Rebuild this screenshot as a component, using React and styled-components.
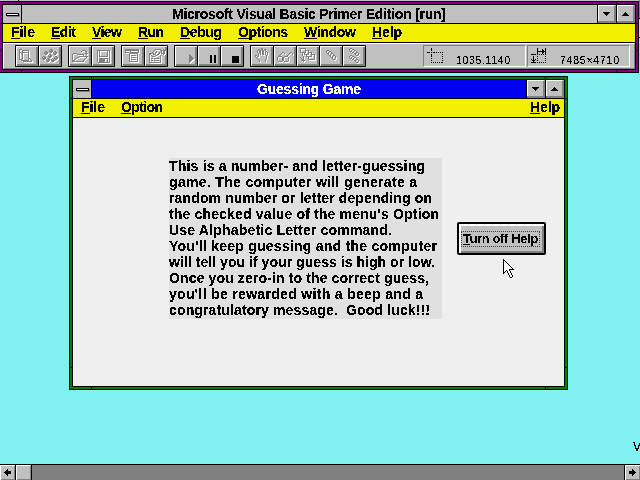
import React, { useLayoutEffect, useRef, useState } from "react";
import styled, { createGlobalStyle } from "styled-components";

const GlobalStyle = createGlobalStyle`
  * { box-sizing: border-box; }
  body { margin: 0; overflow: hidden; background: #80f0f0; }
`;

const Desktop = styled.main`
  position: relative;
  display: flex;
  flex-direction: column;
  width: 640px;
  height: 480px;
  overflow: hidden;
  background: #80f0f0;
  color: #000;
  font-family: "Liberation Sans", Arial, sans-serif;
`;

const TextBox = styled.span`
  display: block;
  flex: none;
  width: ${(p) => p.$width}px;
  height: 16px;
  line-height: 16px;
  font-size: ${(p) => p.$size || 14}px;
  font-weight: ${(p) => (p.$light ? 400 : 700)};
  color: ${(p) => p.$color || "#000"};
  white-space: pre;
  filter: url(#crisp);
`;

const Mnemonic = styled.span`
  text-decoration: underline;
  text-decoration-thickness: 1px;
  text-underline-offset: 1px;
  text-decoration-skip-ink: none;
`;

/* One line of text, tracked so that it fills the given width. */
function Label({ children, width, size, light, color, mnemonic }) {
  const ref = useRef(null);
  const [spacing, setSpacing] = useState(0);
  useLayoutEffect(() => {
    const natural = ref.current.getBoundingClientRect().width;
    setSpacing((width - natural) / (children.length - 1));
  }, [children, width]);
  return (
    <TextBox $width={width} $size={size} $light={light} $color={color}>
      <span ref={ref} style={{ letterSpacing: `${spacing}px` }}>
        {mnemonic ? <Mnemonic>{children[0]}</Mnemonic> : children[0]}
        {children.slice(1)}
      </span>
    </TextBox>
  );
}

/* ---------- bitmap drawings ---------- */

const Bitmap = styled.svg`
  display: block;
  flex: none;
  overflow: visible;
  shape-rendering: crispEdges;
`;

const pathOf = (rows, ch) =>
  rows
    .flatMap((row, y) => [...row].map((c, x) => (c === ch ? `M${x} ${y}h1v1h-1z` : "")))
    .join("");

function Pixels({ rows, color = "#000", etched }) {
  return (
    <Bitmap width={rows[0].length} height={rows.length}>
      {etched && <path d={pathOf(rows, "#")} fill="#fff" transform="translate(1 1)" />}
      <path d={pathOf(rows, "o")} fill="#fff" />
      <path d={pathOf(rows, "#")} fill={color} />
    </Bitmap>
  );
}

const ICONS = {
  form: [
    "###...........",
    "#..#######....",
    "#..#.....#....",
    "##.#######....",
    "#.##.....#....",
    "#..#.....#....",
    "#..#.....#....",
    "#..#.....#....",
    "#..#.....#....",
    "#..#.....##...",
    "###......#.#..",
    "..########..#.",
    "....#########.",
  ],
  module: [
    "........##.......",
    ".......#.##......",
    "...##..####.##...",
    "..#.##..##.#.##..",
    "..####.....####..",
    "...##..##...##...",
    "......#.##.......",
    ".##...####...##..",
    "#.##...##...#.##.",
    "####.##...#.####.",
    ".##.#.##.#.#.##..",
    "....####.####....",
    ".....##...##.....",
  ],
  open: [
    "..........####..",
    ".........#...##.",
    "..............#.",
    ".####........###",
    "#....#######..#.",
    "#..........#....",
    "#......#########",
    "#....##.......#.",
    "#..##........#..",
    "#.#.........#...",
    "##.........#....",
    "############....",
  ],
  save: [
    "#############",
    "#.#.......#.#",
    "#.#.......#.#",
    "#.#.......#.#",
    "#.#.......#.#",
    "#.#.......#.#",
    "#.#########.#",
    "#...........#",
    "#.#########.#",
    "#.######..#.#",
    "#.######..#.#",
    "#.######..#.#",
    ".############",
  ],
  menu: [
    "##############",
    "##############",
    "#....#.......#",
    "####.#########",
    "....#########.",
    "....#.......#.",
    "....#.#####.#.",
    "....#.......#.",
    "....#.#####.#.",
    "....#.......#.",
    "....#.#####.#.",
    "....#.......#.",
    "....#########.",
  ],
  properties: [
    "......######..#.",
    ".....#.....##.##",
    "....#..#....#.##",
    "...#..##..#.#.##",
    "#####.#..##.####",
    "##..##..##....#.",
    "#.#...##...#....",
    "#..###.....#....",
    "#..........#....",
    "#.##.#####.#....",
    "#..........#....",
    "#.##.#####.#....",
    "#..........#....",
    "############....",
  ],
  run: ["#....", "##...", "###..", "####.", "#####", "####.", "###..", "##...", "#...."],
  pause: ["##..##", "##..##", "##..##", "##..##", "##..##", "##..##", "##..##", "##..##"],
  stop: ["#######", "#######", "#######", "#######", "#######", "#######", "#######"],
  hand: [
    "......##.....",
    "...##.##.##..",
    "..#.##.##.#..",
    "..#.##.##.##.",
    "..#.##.##.#.#",
    "...#.#.##.#.#",
    "...#.#.##.#.#",
    "##.#.......#.",
    "#.##.......#.",
    ".#.........#.",
    "..#........#.",
    "...#......#..",
    "....#.....#..",
    "....#.....#..",
  ],
  glasses: [
    ".....##......##.",
    "....#..#....#..#",
    "...#.......#...#",
    "..#.......#.....",
    ".####..####.....",
    "#....##....#....",
    "#....##....#....",
    "#....##....#....",
    "#....##....#....",
    ".####..####.....",
  ],
  calls: [
    "######.........",
    "#....#.........",
    "#....####......",
    "#....#..#......",
    "######..####...",
    "..#.#...#..#...",
    "..#.#####..####",
    "..#...#....#..#",
    "...#..######..#",
    "#..#....#.....#",
    ".#.#....#.....#",
    "..##....#######",
    ".####..........",
    "...#...........",
  ],
  step: [
    ".##.......",
    "#..##.....",
    "#.#..#....",
    ".##..##...",
    "..#.#..#..",
    "...##..##.",
    "....#.#..#",
    ".....##..#",
    "......#..#",
    ".......##.",
  ],
  procedure: [
    ".##.......",
    "#..##.....",
    "#.#..##...",
    ".##.#..#..",
    "...##..##.",
    ".....##..#",
    "......#..#",
    ".##....##.",
    "#..##.....",
    "#.#..##...",
    ".##.#..#..",
    "...##..##.",
    ".....##..#",
    "......#..#",
    ".......##.",
  ],
  position: [
    "....#...........",
    "....#...........",
    "....#...........",
    "................",
    "###.#.##.#.#.#.#",
    "................",
    "....#..........#",
    "....#...........",
    "....#..........#",
    "................",
    "....#..........#",
    "................",
    "....#..........#",
    "................",
    "....#.#.#.#.#.##",
  ],
  size: [
    "......#.......#",
    "......#....#..#",
    "......#....##.#",
    "......#########",
    "......#....##.#",
    "......#....#..#",
    "#####.#.#.#.#.#",
    "...............",
    "..#...#.......#",
    "..#............",
    "..#...#.......#",
    "#.#.#..........",
    ".###..#.......#",
    "..#............",
    "#####.#.#.#.#.#",
  ],
  down: ["#######", ".#####.", "..###..", "...#..."],
  up: ["...#...", "..###..", ".#####.", "#######"],
  left: ["...#...", "..##...", ".######", "#######", ".######", "..##...", "...#..."],
  right: ["...#...", "...##..", "######.", "#######", "######.", "...##..", "...#..."],
  pointer: [
    "#...........",
    "##..........",
    "#o#.........",
    "#oo#........",
    "#ooo#.......",
    "#oooo#......",
    "#ooooo#.....",
    "#oooooo#....",
    "#ooooooo#...",
    "#oooooooo#..",
    "#ooooo#####.",
    "#oo#oo#.....",
    "#o#.#oo#....",
    "##..#oo#....",
    "#....#oo#...",
    ".....#oo#...",
    "......#oo#..",
    "......#oo#..",
    ".......##...",
  ],
};

/* ---------- window chrome ---------- */

const Frame = styled.section`
  position: relative;
  display: flex;
  flex-direction: column;
  flex: none;
  width: ${(p) => p.$width}px;
  height: ${(p) => p.$height}px;
  margin: ${(p) => p.$margin};
  padding: 3px;
  border: 1px solid #000;
  background: ${(p) => p.$color};
  box-shadow: inset 0 0 0 2px ${(p) => p.$color}, inset 0 0 0 3px #000;
`;

/* Corner divisions drawn over the sizing border. */
const Notch = styled.i`
  position: absolute;
  background: #000;
  ${(p) => (p.$vertical ? "width: 1px; height: 4px;" : "width: 4px; height: 1px;")}
  ${(p) => p.$side}: -1px;
  ${(p) => p.$from}: 21px;
`;

const NOTCHES = [
  ["top", "left"], ["top", "right"], ["bottom", "left"], ["bottom", "right"],
  ["left", "top"], ["right", "top"], ["left", "bottom"], ["right", "bottom"],
];

function Window({ children, ...frame }) {
  return (
    <Frame {...frame}>
      {children}
      {NOTCHES.map(([side, from]) => (
        <Notch key={side + from} $side={side} $from={from} $vertical={side === "top" || side === "bottom"} />
      ))}
    </Frame>
  );
}

const TitleRow = styled.header`
  display: flex;
  flex: none;
  height: 19px;
  border-bottom: 1px solid #000;
  background: ${(p) => p.$color};
`;

const SystemBox = styled.div`
  display: flex;
  align-items: center;
  justify-content: center;
  width: 19px;
  border-right: 1px solid #000;
  background: #c0c0c0;
`;

const SystemBar = styled.i`
  width: 13px;
  height: 3px;
  border: 1px solid #000;
  background: #fff;
  box-shadow: 1px 1px 0 #808080;
`;

const Caption = styled.h1`
  display: flex;
  flex: 1;
  margin: 0;
  padding: 1px 0 0 ${(p) => p.$indent}px;
`;

const SizeButton = styled.div`
  display: flex;
  align-items: center;
  justify-content: center;
  width: 18px;
  height: 18px;
  margin-left: 1px;
  border: solid;
  border-width: 1px 2px 2px 0;
  border-color: #fff #808080 #808080 #000;
  box-shadow: -1px 0 0 #000, inset 1px 0 0 #fff;
  background: #c0c0c0;
`;

function TitleBar({ title, width, indent, color, textColor }) {
  return (
    <TitleRow $color={color}>
      <SystemBox><SystemBar /></SystemBox>
      <Caption $indent={indent}><Label width={width} color={textColor}>{title}</Label></Caption>
      <SizeButton><Pixels rows={ICONS.down} /></SizeButton>
      <SizeButton><Pixels rows={ICONS.up} /></SizeButton>
    </TitleRow>
  );
}

const MenuRow = styled.nav`
  display: flex;
  flex: none;
  gap: 16px;
  height: 19px;
  padding: 0 4px 0 8px;
  border-bottom: 1px solid #000;
  background: #f0f000;
`;

const Spacer = styled.div`
  flex: 1;
`;

/* ---------- toolbar ---------- */

const Toolbar = styled.div`
  display: flex;
  flex: 1;
  gap: 6px;
  padding: 1px 4px 1px 11px;
  border: 1px solid;
  border-color: #fff #808080 #808080 #fff;
  background: #c0c0c0;
`;

const ButtonGroup = styled.div`
  display: flex;
  height: 22px;
  border: solid #000;
  border-width: 1px 0 1px 1px;
  border-radius: 1px;
`;

const ToolButton = styled.div`
  width: 23px;
  height: 20px;
  border: solid #000;
  border-width: 0 1px 0 0;
  box-shadow: inset 1px 1px 0 #fff, inset -2px -2px 0 #808080;
  background: #c0c0c0;
  padding: ${(p) => p.$y}px 0 0 ${(p) => p.$x}px;
`;

const GROUPS = [
  [["form", 3, 3], ["module", 3, 3]],
  [["open", 3, 4], ["save", 5, 4]],
  [["menu", 3, 3], ["properties", 4, 3]],
  [["run", 14, 8], ["pause", 12, 9, true], ["stop", 11, 10, true]],
  [["hand", 4, 2], ["glasses", 3, 6], ["calls", 3, 2], ["step", 6, 4], ["procedure", 6, 2]],
];

const StatusBox = styled.div`
  display: flex;
  width: 103px;
  height: 22px;
  margin-left: ${(p) => (p.$first ? "0" : "-5px")};
  padding: 2px 0 0 3px;
  border: 1px solid;
  border-color: #808080 #fff #fff #808080;
`;

const StatusValue = styled.div`
  padding: 4px 0 0 ${(p) => p.$indent}px;
`;

/* ---------- game window ---------- */

const Client = styled.div`
  display: flex;
  flex: 1;
  align-items: flex-start;
  gap: 15px;
  padding: 40px 0 0 96px;
  background: #efefef;
`;

const HelpText = styled.div`
  width: 273px;
  height: 161px;
  background: #e0e0e0;
`;

const LINES = [
  ["This is a number- and letter-guessing", 256],
  ["game. The computer will generate a", 248],
  ["random number or letter depending on", 263],
  ["the checked value of the menu's Option", 270],
  ["Use Alphabetic Letter command.", 223],
  ["You'll keep guessing and the computer", 268],
  ["will tell you if your guess is high or low.", 266],
  ["Once you zero-in to the correct guess,", 260],
  ["you'll be rewarded with a beep and a", 254],
  ["congratulatory message.  Good luck!!!", 261],
];

const PushButton = styled.button`
  display: flex;
  align-items: flex-start;
  width: 89px;
  height: 33px;
  margin: 64px 0 0;
  padding: 7px 0 0 2px;
  border: 2px solid #000;
  border-radius: 2px;
  background: #c0c0c0;
  box-shadow: inset 2px 2px 0 #fff, inset -2px -2px 0 #808080;
  font-family: inherit;
`;

const FocusBox = styled.span`
  display: flex;
  align-items: center;
  width: 79px;
  height: 16px;
  border: 1px dotted #404040;
  padding-left: 1px;
`;

const PointerLayer = styled.div`
  position: absolute;
  left: 503px;
  top: 259px;
`;

const Backdrop = styled.div`
  display: flex;
  flex: 1;
  align-items: flex-end;
  justify-content: flex-end;
  width: 650px;
  padding: 0 8px 9px 0;
`;

/* ---------- scrollbar and the window edges behind ---------- */

const ScrollBar = styled.footer`
  display: flex;
  flex: none;
  height: 16px;
  border-top: 1px solid #000;
  background: #808080;
`;

const ScrollPart = styled.div`
  display: flex;
  align-items: center;
  justify-content: center;
  width: 15px;
  height: 15px;
  box-shadow: ${(p) => (p.$end ? "-1px" : "1px")} 0 0 #000, inset 1px 1px 0 #fff, inset -1px -1px 0 #808080;
  margin-right: ${(p) => (p.$end ? 0 : 1)}px;
  background: #c0c0c0;
`;

const RearEdge = styled.div`
  height: 1px;
  flex: none;
  background: linear-gradient(90deg, #c0c0c0 18px, #000 18px, #000 19px, #c0c0c0 19px);
`;

const RearSide = styled.div`
  position: absolute;
  right: 0;
  top: 0;
  width: 1px;
  height: 38px;
  background: linear-gradient(#808080 18px, #000 18px, #000 19px, #f0f000 19px, #f0f000 37px, #000 37px);
`;

export default function App() {
  return (
    <Desktop>
      <GlobalStyle />
      <svg width="0" height="0" style={{ position: "absolute" }}>
        <filter id="crisp" x="-5%" y="-20%" width="110%" height="140%" colorInterpolationFilters="sRGB">
          <feComponentTransfer>
            <feFuncA type="discrete" tableValues="0 0 1 1 1" />
          </feComponentTransfer>
        </filter>
      </svg>
      <RearEdge />
      <RearSide />
      <Window $width={640} $height={72} $margin="0 0 0 -1px" $color="#800080">
        <TitleBar title="Microsoft Visual Basic Primer Edition [run]" width={274} indent={150} color="#c0c0c0" />
        <MenuRow>
          {[["File", 24], ["Edit", 25], ["View", 30], ["Run", 26], ["Debug", 42], ["Options", 50], ["Window", 52], ["Help", 30]].map(
            ([name, width]) => <Label key={name} width={width} mnemonic>{name}</Label>
          )}
        </MenuRow>
        <Toolbar>
          {GROUPS.map((group) => (
            <ButtonGroup key={group[0][0]}>
              {group.map(([name, x, y, active]) => (
                <ToolButton key={name} $x={x} $y={y}>
                  <Pixels rows={ICONS[name]} color={active ? "#000" : "#808080"} etched={!active} />
                </ToolButton>
              ))}
            </ButtonGroup>
          ))}
          <Spacer />
          <StatusBox $first>
            <Pixels rows={ICONS.position} />
            <StatusValue $indent={13}><Label width={54} size={10.5} light>1035.1140</Label></StatusValue>
          </StatusBox>
          <StatusBox>
            <Pixels rows={ICONS.size} />
            <StatusValue $indent={14}><Label width={59} size={10.5} light>7485×4710</Label></StatusValue>
          </StatusBox>
        </Toolbar>
      </Window>

      <Window $width={499} $height={314} $margin="3px 0 0 69px" $color="#008000">
        <TitleBar title="Guessing Game" width={104} indent={165} color="#0000f0" textColor="#fff" />
        <MenuRow>
          <Label width={24} mnemonic>File</Label>
          <Label width={42} mnemonic>Option</Label>
          <Spacer />
          <Label width={30} mnemonic>Help</Label>
        </MenuRow>
        <Client>
          <HelpText>
            {LINES.map(([line, width]) => <Label key={line} width={width}>{line}</Label>)}
          </HelpText>
          <PushButton>
            <FocusBox><Label width={75} size={12.5} mnemonic>Turn off Help</Label></FocusBox>
          </PushButton>
        </Client>
      </Window>

      <Backdrop><Label width={9} size={12} light>V </Label></Backdrop>
      <ScrollBar>
        <ScrollPart><Pixels rows={ICONS.left} /></ScrollPart>
        <ScrollPart />
        <Spacer />
        <ScrollPart $end><Pixels rows={ICONS.right} /></ScrollPart>
      </ScrollBar>
      <PointerLayer><Pixels rows={ICONS.pointer} /></PointerLayer>
    </Desktop>
  );
}
